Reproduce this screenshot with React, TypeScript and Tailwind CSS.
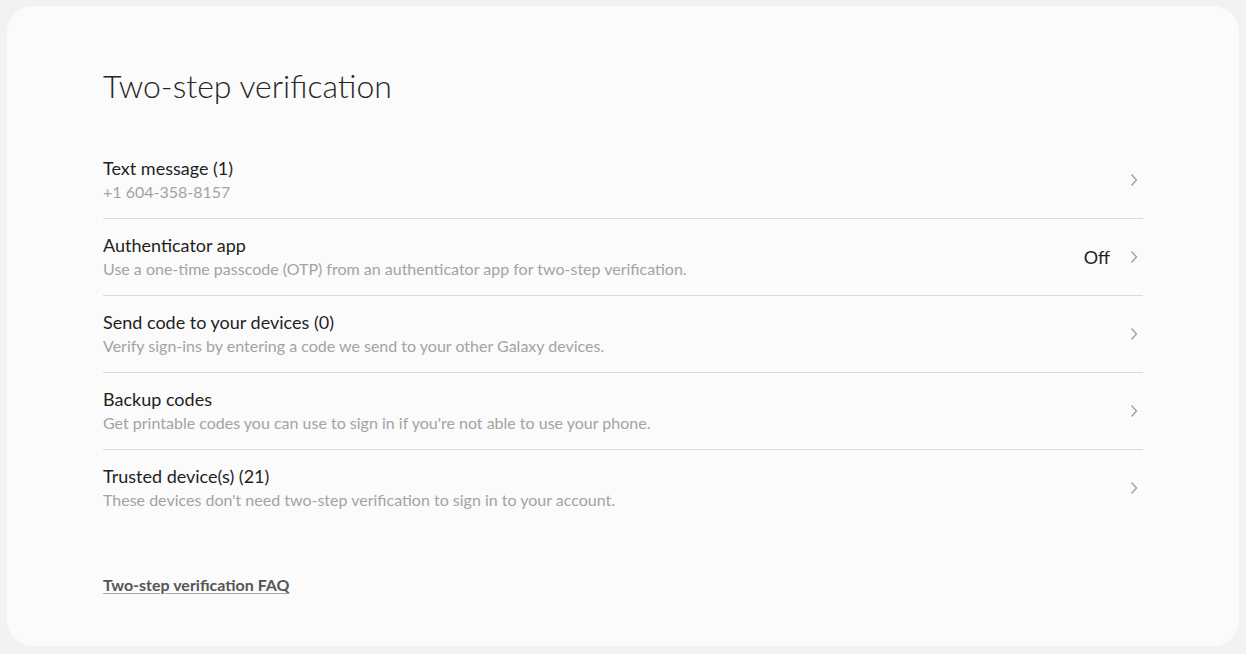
type Row = {
  title: string;
  sub: string;
  status?: string;
};

const ROWS: Row[] = [
  { title: 'Text message (1)', sub: '+1 604-358-8157' },
  {
    title: 'Authenticator app',
    sub: 'Use a one-time passcode (OTP) from an authenticator app for two-step verification.',
    status: 'Off',
  },
  { title: 'Send code to your devices (0)', sub: 'Verify sign-ins by entering a code we send to your other Galaxy devices.' },
  { title: 'Backup codes', sub: "Get printable codes you can use to sign in if you're not able to use your phone." },
  { title: 'Trusted device(s) (21)', sub: "These devices don't need two-step verification to sign in to your account." },
];

function Chevron() {
  return (
    <svg width="8" height="14" viewBox="0 0 8 14" fill="none" className="mr-[5px] shrink-0">
      <path d="M1.5 1.5 L6.5 7 L1.5 12.5" stroke="#a0a0a0" strokeWidth="1.4" />
    </svg>
  );
}

export default function App() {
  return (
    <div className="min-h-screen bg-[#f2f2f2] pt-[6px] pr-[7px] pb-[8px] pl-[7px] font-['Lato',sans-serif]">
      <div className="h-[640px] rounded-[26px] bg-[#fbfbfb] px-[96px] pt-[58px]">
        <h1 className="text-[32px] font-light leading-[44px] text-[#252525]">Two-step verification</h1>

        <ul className="mt-[34px]">
          {ROWS.map((r, i) => (
            <li
              key={r.title}
              className={`flex cursor-pointer items-center py-[14px] ${i < ROWS.length - 1 ? 'border-b border-[#dcdcdc]' : ''}`}
            >
              <div className="flex-1">
                <p className="text-[18px] leading-[24px] text-[#1f1f1f]">{r.title}</p>
                <p className="text-[16px] leading-[24px] text-[#a3a3a3]">{r.sub}</p>
              </div>
              {r.status && <span className="mr-[20px] text-[18px] text-[#1f1f1f]">{r.status}</span>}
              <Chevron />
            </li>
          ))}
        </ul>

        <a href="#" className="mt-[47px] inline-block text-[16px] font-bold text-[#555] underline decoration-[#aaa] underline-offset-2">
          Two-step verification FAQ
        </a>
      </div>
    </div>
  );
}
